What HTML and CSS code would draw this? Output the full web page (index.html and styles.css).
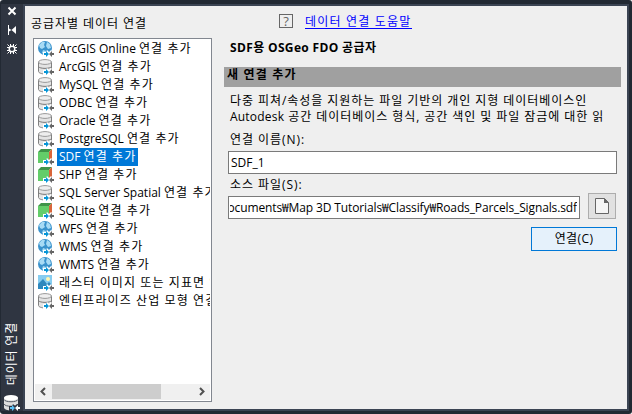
FILE: index.html
```html
<!DOCTYPE html>
<html lang="ko">
<head>
    <meta charset="UTF-8">
    <title>데이터 연결</title>
    <link rel="stylesheet" href="styles.css">
</head>
<body>
    <!-- Icons -->
    <svg class="sprite" width="0" height="0">
        <symbol id="arrows" viewBox="0 0 16 16">
            <path d="M5 11h3l1-2 2 2 2-2 2 2h1v5H5z" fill="#fff"/>
            <path d="M6 12h2v-2l3 3-3 3v-2H6z" fill="#0696d7"/>
            <path d="M16 12h-2v-2l-3 3 3 3v-2h2z" fill="#666"/>
        </symbol>
        <symbol id="db" viewBox="0 0 16 16">
            <path d="M.5 3v9.500C.5 14 4 15 7 15s6.500-1 6.500-2.500V3z" fill="#e4e4e4" stroke="#808080"/>
            <path d="M.5 7.500c1 2.500 12 2.500 13 0" fill="none" stroke="#777"/>
            <ellipse cx="7" cy="3" rx="6.500" ry="2.400" fill="#eee" stroke="#999"/>
            <use href="#arrows"/>
        </symbol>
        <symbol id="globe" viewBox="0 0 16 16">
            <circle cx="7" cy="7" r="7" fill="#3a92cc"/>
            <path d="M1 4l3-3h3L6 4l1 2-3 2-2-1zM9 1l3 2 1 4-3 1-2-3zM5 9l3 1-1 4-3-2z" fill="#a8dbf5"/>
            <use href="#arrows"/>
        </symbol>
        <symbol id="cube" viewBox="0 0 16 16">
            <path d="M0 3l3-3h11l-3 3z" fill="#3f9449"/>
            <path d="M0 3h11v11H0z" fill="#63cd69"/>
            <path d="M11 3l3-3v11l-3 3z" fill="#d9653a"/>
            <use href="#arrows"/>
        </symbol>
        <symbol id="raster" viewBox="0 0 16 16">
            <path d="M0 0h14v14H0z" fill="#87cdf0"/>
            <path d="M0 9l5-5 4 5 2-2 3 3v4H0z" fill="#2d87bd"/>
            <circle cx="10" cy="4" r="2" fill="#fff6b0"/>
            <use href="#arrows"/>
        </symbol>
    </svg>

    <div class="palette">
        <div class="rail">
            <svg class="rail-btn" viewBox="0 0 12 12"><path d="M2.500 2.500l7 7M9.500 2.500l-7 7" stroke="#fff" stroke-width="2"/></svg>
            <svg class="rail-btn" viewBox="0 0 12 12"><path d="M2.500 1v10" stroke="#fff"/><path d="M3 4.500L5.500 6 3 7.500zM10 2v8L5.500 6z" fill="#fff"/></svg>
            <svg class="rail-btn" viewBox="0 0 12 12"><circle cx="6" cy="6" r="2.800" fill="none" stroke="#fff" stroke-width="1.500"/><path d="M4.500 1v3M7.500 1v3M4.500 8v3M7.500 8v3M1 4.500h3M1 7.500h3M8 4.500h3M8 7.500h3M1.500 1.500l2 2M8.500 8.500l2 2M10.500 1.500l-2 2M3.500 8.500l-2 2" stroke="#fff"/></svg>
            <div class="rail-title">데이터 연결</div>
            <svg class="rail-icon" viewBox="0 0 16 16"><path d="M0 2.500v10c0 4 14 4 14 0v-10z" fill="#ddd"/><ellipse cx="7" cy="2.800" rx="7" ry="2.800" fill="#fff"/><path d="M0 4.500c1 3 13 3 14 0M0 9c1 3 13 3 14 0" fill="none" stroke="#555b66"/><path d="M5 11h3l1-2 2 2 2-2 3 2v5H5z" fill="#2f3541"/><path d="M6 12h2v-2l3 3-3 3v-2H6z" fill="#5bc0f5"/><path d="M16 12h-2v-2l-3 3 3 3v-2h2z" fill="#fff"/></svg>
        </div>
        <div class="client">
            <!-- Provider list -->
            <div class="providers">
                <div class="heading">공급자별 데이터 연결</div>
                <div class="list-box">
                    <ul class="list">
                        <li><svg><use href="#globe"/></svg><span>ArcGIS Online <b>연결 추가</b></span></li>
                        <li><svg><use href="#db"/></svg><span>ArcGIS <b>연결 추가</b></span></li>
                        <li><svg><use href="#db"/></svg><span>MySQL <b>연결 추가</b></span></li>
                        <li><svg><use href="#db"/></svg><span>ODBC <b>연결 추가</b></span></li>
                        <li><svg><use href="#db"/></svg><span>Oracle <b>연결 추가</b></span></li>
                        <li><svg><use href="#db"/></svg><span>PostgreSQL <b>연결 추가</b></span></li>
                        <li class="selected"><svg><use href="#cube"/></svg><span>SDF <b>연결 추가</b></span></li>
                        <li><svg><use href="#cube"/></svg><span>SHP <b>연결 추가</b></span></li>
                        <li><svg><use href="#db"/></svg><span>SQL Server Spatial <b>연결 추가</b></span></li>
                        <li><svg><use href="#cube"/></svg><span>SQLite <b>연결 추가</b></span></li>
                        <li><svg><use href="#globe"/></svg><span>WFS <b>연결 추가</b></span></li>
                        <li><svg><use href="#globe"/></svg><span>WMS <b>연결 추가</b></span></li>
                        <li><svg><use href="#globe"/></svg><span>WMTS <b>연결 추가</b></span></li>
                        <li><svg><use href="#raster"/></svg><span><b>래스터 이미지 또는 지표면 연결</b></span></li>
                        <li><svg><use href="#db"/></svg><span><b>엔터프라이즈 산업 모형 연결</b></span></li>
                    </ul>
                    <div class="scrollbar">
                        <svg viewBox="0 0 17 16"><path d="M10 4L6.500 7.500 10 11" fill="none" stroke="#505050" stroke-width="2"/></svg>
                        <div class="track"><div class="thumb"></div></div>
                        <svg viewBox="0 0 17 16"><path d="M7 4l3.500 3.500L7 11" fill="none" stroke="#505050" stroke-width="2"/></svg>
                    </div>
                </div>
            </div>

            <!-- Connection form -->
            <div class="details">
                <div class="help"><span class="help-icon">?</span><a href="#">데이터 연결 도움말</a></div>
                <div class="provider">SDF용 OSGeo FDO 공급자</div>
                <div class="section">새 연결 추가</div>
                <div class="description">다중 피쳐/속성을 지원하는 파일 기반의 개인 지형 데이터베이스인<br><span>Autodesk</span> 공간 데이터베이스 형식, 공간 색인 및 파일 잠금에 대한 읽</div>
                <div class="label">연결 이름(N):</div>
                <div class="field">SDF_1</div>
                <div class="label label-source">소스 파일(S):</div>
                <div class="source">
                    <div class="field field-path"><div class="path"><span>Documents₩Map 3D Tutorials₩Classify₩Roads_Parcels_Signals.sdf</span></div></div>
                    <div class="browse"><svg viewBox="0 0 14 16"><path d="M.5.5h9l4 4v11H.5z" fill="#f5f5f5" stroke="#666"/><path d="M9 0l5 5H9z" fill="#666"/></svg></div>
                </div>
                <div class="connect">연결(C)</div>
            </div>
        </div>
    </div>
</body>
</html>
```
FILE: styles.css
```css
* {
    box-sizing: border-box;
}

body {
    margin: 0;
    background: #fff;
    color: #000;
    font: 12px/16px "Open Sans", "Noto Sans CJK KR", sans-serif;
    overflow: hidden;
}

.sprite {
    display: block;
}

.palette {
    display: flex;
    width: 632px;
    height: 414px;
    padding: 4px 3px 3px 0;
    background: #222933;
    border-radius: 3px;
}

/* Left title rail */
.rail {
    display: flex;
    flex-direction: column;
    align-items: center;
    width: 22px;
    margin-left: 1px;
    padding-top: 1px;
    background: #2f3541;
}

.rail-btn {
    width: 12px;
    height: 12px;
    margin-bottom: 7px;
}

.rail-title {
    margin-top: auto;
    color: #fff;
    letter-spacing: 0.8px;
    writing-mode: vertical-rl;
    text-orientation: sideways;
    transform: rotate(180deg);
}

.rail-icon {
    width: 16px;
    height: 16px;
    margin-top: 10px;
}

.client {
    display: flex;
    flex: 1;
    border: 2px solid #3b4453;
    background: #efefef;
}

/* Provider list */
.providers {
    width: 179px;
    margin: 10px 0 0 8px;
}

.heading {
    height: 22px;
    margin-left: -2px;
    letter-spacing: 0.95px;
}

.list-box {
    display: flex;
    flex-direction: column;
    height: 364px;
    padding: 1px;
    border: 1px solid #828790;
    background: #fff;
}

.list {
    flex: 1;
    margin: 0;
    padding: 0;
    list-style: none;
    overflow: hidden;
}

.list li {
    display: flex;
    align-items: center;
    height: 18px;
    white-space: nowrap;
}

.list svg {
    flex: none;
    width: 16px;
    height: 16px;
    margin: 0 3px;
}

.list span {
    height: 18px;
    padding: 0 2px;
    line-height: 18px;
}

.list b {
    font-weight: normal;
    letter-spacing: 1.1px;
}

.list .selected span {
    background: #0078d7;
    color: #fff;
}

.scrollbar {
    display: flex;
    height: 16px;
    background: #f0f0f0;
}

.scrollbar svg {
    width: 17px;
    height: 16px;
}

.track {
    flex: 1;
}

.thumb {
    width: 109px;
    height: 15px;
    background: #cdcdcd;
}

/* Connection form */
.details {
    flex: 1;
    padding: 8px 6px 0 12px;
}

.help {
    display: flex;
    gap: 12px;
    height: 26px;
    padding-left: 55px;
}

.help-icon {
    width: 14px;
    height: 14px;
    border: 1px solid #666;
    color: #666;
    font-size: 13px;
    line-height: 12px;
    text-align: center;
}

.help a {
    height: 15px;
    border-bottom: 1px solid #00f;
    color: #00f;
    letter-spacing: 1.2px;
    line-height: 15px;
    text-decoration: none;
}

.provider {
    height: 27px;
    padding-left: 6px;
    font-weight: bold;
    letter-spacing: 0.35px;
}

.section {
    height: 20px;
    padding-left: 3px;
    background: #a0a0a0;
    font-weight: bold;
    letter-spacing: 1.2px;
}

.description {
    height: 45px;
    padding: 6px 0 0 6px;
    letter-spacing: 0.94px;
    white-space: nowrap;
}

.description span {
    letter-spacing: 0.2px;
}

.label {
    height: 19px;
    padding-left: 6px;
    letter-spacing: 0.95px;
}

.field {
    width: 389px;
    height: 23px;
    margin-left: 4px;
    padding: 0 2px;
    border: 1px solid #7a7a7a;
    background: #fff;
    line-height: 21px;
}

.label-source {
    padding-top: 3px;
}

.source {
    display: flex;
    gap: 8px;
}

.field-path {
    width: 352px;
    margin-top: 3px;
    padding-left: 1px;
}

/* long paths stay scrolled to the file name */
.path {
    display: flex;
    justify-content: flex-end;
    letter-spacing: -0.12px;
    white-space: nowrap;
    overflow: hidden;
}

.browse {
    display: flex;
    align-items: center;
    justify-content: center;
    width: 28px;
    height: 26px;
    border: 1px solid #adadad;
    background: #e1e1e1;
}

.browse svg {
    width: 14px;
    height: 16px;
}

.connect {
    width: 86px;
    height: 24px;
    margin: 8px 0 0 307px;
    border: 1px solid #0078d7;
    background: #e5f1fb;
    letter-spacing: 0.4px;
    line-height: 22px;
    text-align: center;
}
```
